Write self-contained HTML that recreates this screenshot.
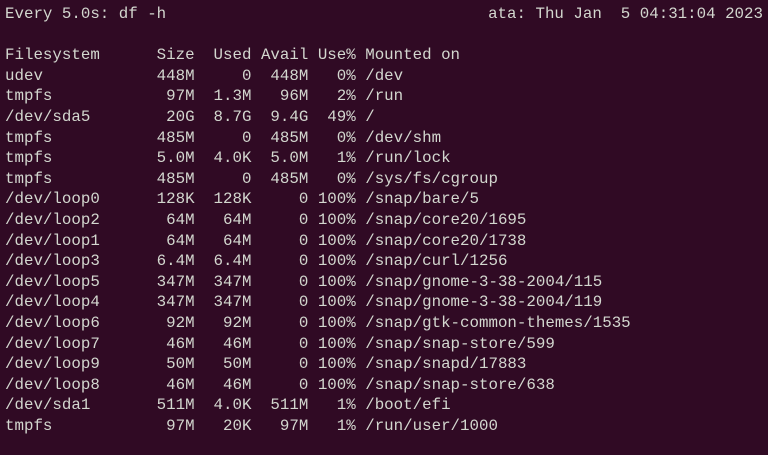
<!DOCTYPE html>
<html><head><style>
html,body{margin:0;padding:0;background:#300a24;width:768px;height:455px;overflow:hidden}
pre{margin:0;position:absolute;left:5px;top:4px;font-family:"Liberation Mono","DejaVu Sans Mono",monospace;font-size:15.8px;line-height:20.6px;color:#d3d7cf;white-space:pre}
#r{left:auto;right:5px}
</style></head><body>
<pre>Every 5.0s: df -h

Filesystem      Size  Used Avail Use% Mounted on
udev            448M     0  448M   0% /dev
tmpfs            97M  1.3M   96M   2% /run
/dev/sda5        20G  8.7G  9.4G  49% /
tmpfs           485M     0  485M   0% /dev/shm
tmpfs           5.0M  4.0K  5.0M   1% /run/lock
tmpfs           485M     0  485M   0% /sys/fs/cgroup
/dev/loop0      128K  128K     0 100% /snap/bare/5
/dev/loop2       64M   64M     0 100% /snap/core20/1695
/dev/loop1       64M   64M     0 100% /snap/core20/1738
/dev/loop3      6.4M  6.4M     0 100% /snap/curl/1256
/dev/loop5      347M  347M     0 100% /snap/gnome-3-38-2004/115
/dev/loop4      347M  347M     0 100% /snap/gnome-3-38-2004/119
/dev/loop6       92M   92M     0 100% /snap/gtk-common-themes/1535
/dev/loop7       46M   46M     0 100% /snap/snap-store/599
/dev/loop9       50M   50M     0 100% /snap/snapd/17883
/dev/loop8       46M   46M     0 100% /snap/snap-store/638
/dev/sda1       511M  4.0K  511M   1% /boot/efi
tmpfs            97M   20K   97M   1% /run/user/1000</pre>
<pre id="r">ata: Thu Jan  5 04:31:04 2023</pre>
</body></html>
